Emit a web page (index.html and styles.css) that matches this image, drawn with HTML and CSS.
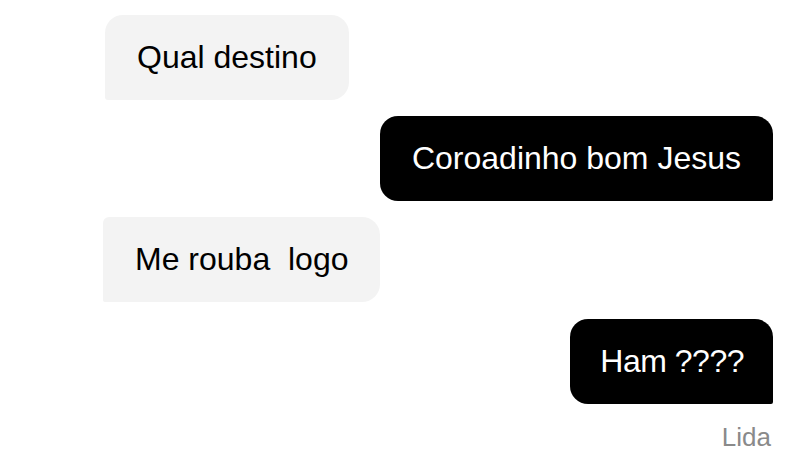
FILE: index.html
```html
<!DOCTYPE html>
<html lang="pt">
<head>
    <meta charset="UTF-8">
    <meta name="viewport" content="width=device-width, initial-scale=1.0">
    <title>Conversa</title>
    <link rel="stylesheet" href="styles.css">
</head>
<body>
    <div class="chat">
        <div class="msg received first">Qual destino</div>
        <div class="msg sent">Coroadinho bom Jesus</div>
        <div class="msg received second">Me rouba&nbsp; logo</div>
        <div class="msg sent last">Ham ????</div>
        <div class="status">Lida</div>
    </div>
</body>
</html>
```

FILE: styles.css
```css
body {
    margin: 0;
    background: #fff;
    font-family: 'Liberation Sans', Arial, sans-serif;
}
.chat {
    display: flex;
    flex-direction: column;
    gap: 16px;
    padding: 15px 37px 0 104px;
}
.msg {
    height: 85px;
    display: flex;
    align-items: center;
    padding: 0 32px;
    font-size: 32px;
    box-sizing: border-box;
}
.received {
    align-self: flex-start;
    background-color: #f3f3f3;
    color: #000;
}
.received.first {
    border-radius: 18px 18px 18px 3px;
    margin-left: 1px;
}
.received.second {
    border-radius: 6px 18px 18px 2px;
    margin-left: -1px;
}
.sent {
    align-self: flex-end;
    background-color: #000;
    color: #fff;
    border-radius: 18px 18px 2px 18px;
}
.sent.last {
    margin-top: 1px;
    padding: 0 29px 0 30px;
    letter-spacing: -0.5px;
}
.status {
    align-self: flex-end;
    margin-top: 2px;
    margin-right: 2px;
    font-size: 26px;
    color: #8a8a8a;
}
```
